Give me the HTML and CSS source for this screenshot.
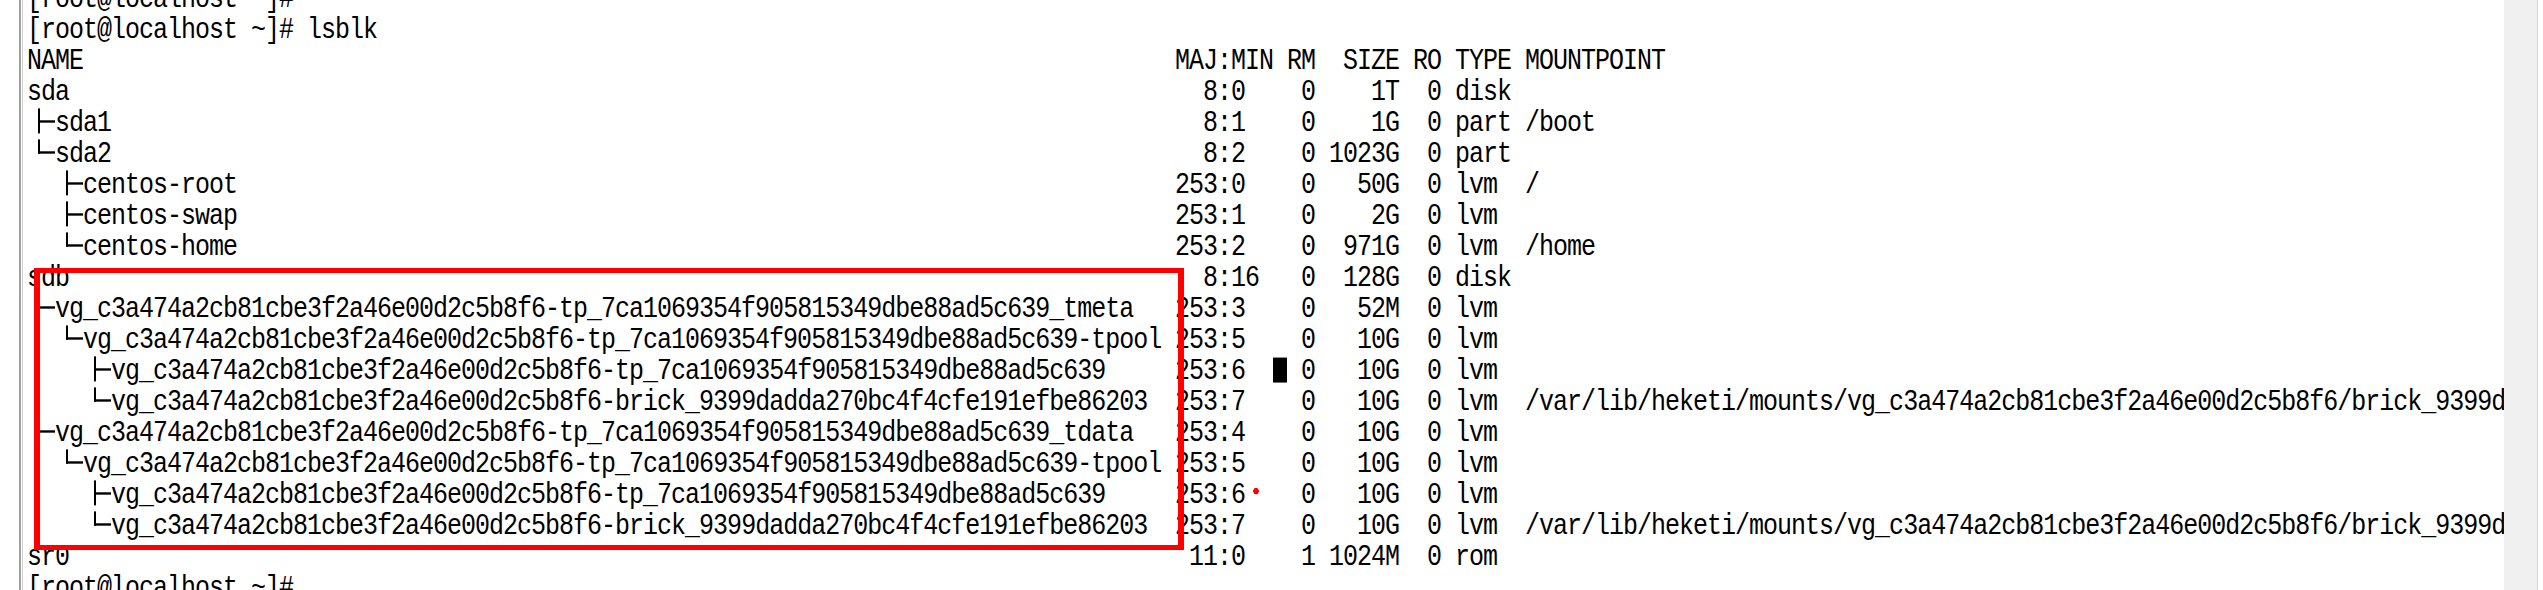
FILE: index.html
```html
<!DOCTYPE html>
<html lang="en">
<head>
  <meta charset="UTF-8" />
  <title>lsblk</title>
  <link rel="stylesheet" href="styles.css">
</head>
<body>
  <div class="window">
    <div class="gutter"></div>
    <div class="screen">
      <div class="lines">
        <div class="row"><span class="nm">[root@localhost ~]#</span></div>
        <div class="row"><span class="nm">[root@localhost ~]# lsblk</span></div>
        <div class="row"><span class="nm">NAME</span><span class="rest">MAJ:MIN RM  SIZE RO TYPE MOUNTPOINT</span></div>
        <div class="row"><span class="nm">sda</span><span class="rest">  8:0    0    1T  0 disk</span></div>
        <div class="row"><span class="nm"><span class="tee"></span>sda1</span><span class="rest">  8:1    0    1G  0 part /boot</span></div>
        <div class="row"><span class="nm"><span class="end"></span>sda2</span><span class="rest">  8:2    0 1023G  0 part</span></div>
        <div class="row"><span class="nm">  <span class="tee"></span>centos-root</span><span class="rest">253:0    0   50G  0 lvm  /</span></div>
        <div class="row"><span class="nm">  <span class="tee"></span>centos-swap</span><span class="rest">253:1    0    2G  0 lvm</span></div>
        <div class="row"><span class="nm">  <span class="end"></span>centos-home</span><span class="rest">253:2    0  971G  0 lvm  /home</span></div>
        <div class="row"><span class="nm">sdb</span><span class="rest">  8:16   0  128G  0 disk</span></div>
        <div class="row"><span class="nm"><span class="tee"></span>vg_c3a474a2cb81cbe3f2a46e00d2c5b8f6-tp_7ca1069354f905815349dbe88ad5c639_tmeta</span><span class="rest">253:3    0   52M  0 lvm</span></div>
        <div class="row"><span class="nm"><span class="bar"></span><span class="end"></span>vg_c3a474a2cb81cbe3f2a46e00d2c5b8f6-tp_7ca1069354f905815349dbe88ad5c639-tpool</span><span class="rest">253:5    0   10G  0 lvm</span></div>
        <div class="row"><span class="nm"><span class="bar"></span>  <span class="tee"></span>vg_c3a474a2cb81cbe3f2a46e00d2c5b8f6-tp_7ca1069354f905815349dbe88ad5c639</span><span class="rest">253:6  <span class="cursor"></span> 0   10G  0 lvm</span></div>
        <div class="row"><span class="nm"><span class="bar"></span>  <span class="end"></span>vg_c3a474a2cb81cbe3f2a46e00d2c5b8f6-brick_9399dadda270bc4f4cfe191efbe86203</span><span class="rest">253:7    0   10G  0 lvm  /var/lib/heketi/mounts/vg_c3a474a2cb81cbe3f2a46e00d2c5b8f6/brick_9399d</span></div>
        <div class="row"><span class="nm"><span class="end"></span>vg_c3a474a2cb81cbe3f2a46e00d2c5b8f6-tp_7ca1069354f905815349dbe88ad5c639_tdata</span><span class="rest">253:4    0   10G  0 lvm</span></div>
        <div class="row"><span class="nm">  <span class="end"></span>vg_c3a474a2cb81cbe3f2a46e00d2c5b8f6-tp_7ca1069354f905815349dbe88ad5c639-tpool</span><span class="rest">253:5    0   10G  0 lvm</span></div>
        <div class="row"><span class="nm">    <span class="tee"></span>vg_c3a474a2cb81cbe3f2a46e00d2c5b8f6-tp_7ca1069354f905815349dbe88ad5c639</span><span class="rest">253:6<span class="dot"></span>   0   10G  0 lvm</span></div>
        <div class="row"><span class="nm">    <span class="end"></span>vg_c3a474a2cb81cbe3f2a46e00d2c5b8f6-brick_9399dadda270bc4f4cfe191efbe86203</span><span class="rest">253:7    0   10G  0 lvm  /var/lib/heketi/mounts/vg_c3a474a2cb81cbe3f2a46e00d2c5b8f6/brick_9399d</span></div>
        <div class="row"><span class="nm">sr0</span><span class="rest"> 11:0    1 1024M  0 rom</span></div>
        <div class="row"><span class="nm">[root@localhost ~]#</span></div>
      </div>
      <div class="mark"></div>
    </div>
    <div class="scroll"></div>
  </div>
</body>
</html>
```

FILE: styles.css
```css
body {
  margin: 0;
  background: #fff;
  overflow: hidden;
}
.window {
  display: flex;
  height: 590px;
}
.gutter {
  flex: none;
  width: 19px;
}
.screen {
  position: relative;
  flex: none;
  width: 2485px;
  box-sizing: border-box;
  border-left: 2px solid #a0a0a0;
  box-shadow: inset 1px 0 0 #fff, inset 2px 0 0 #cfcfcf;
  padding-left: 6px;
  overflow: hidden;
  font-family: "Liberation Mono", monospace;
  font-size: 25px;
  letter-spacing: -1px;
  color: #000;
}
.lines {
  margin-top: -17px;
}
.row {
  display: grid;
  grid-template-columns: 1148px max-content;
  height: 31px;
  line-height: 35px;
  transform: scaleY(1.19);
  transform-origin: 0 24px;
}
.nm, .rest {
  white-space: pre;
}
.tee, .end, .bar {
  display: inline-block;
  width: 28px;
  height: 31px;
  vertical-align: top;
  background-repeat: no-repeat;
  background-image: linear-gradient(#000, #000), linear-gradient(#000, #000);
}
.tee {
  background-size: 2px 21px, 15px 2px;
  background-position: 11px 5px, 13px 15px;
}
.end {
  background-size: 2px 12px, 17px 2px;
  background-position: 11px 5px, 11px 15px;
}
.bar {
  background-image: linear-gradient(#000, #000);
  background-size: 2px 31px;
  background-position: 11px 0;
}
.cursor {
  display: inline-block;
  width: 14px;
  height: 21px;
  background: #000;
  vertical-align: -3px;
}
.dot {
  display: inline-block;
  width: 14px;
  height: 10px;
  vertical-align: 5px;
  background: radial-gradient(circle at 11px 5px, #f00 2.5px, transparent 3px);
}
.mark {
  position: absolute;
  left: 13px;
  top: 268px;
  width: 1150px;
  height: 282px;
  box-sizing: border-box;
  border: 5px solid #f00;
  border-left-width: 6px;
  border-right-width: 6px;
}
.scroll {
  flex: none;
  width: 33px;
  background: #f0f0f0;
  border-right: 1px solid #d4d4d4;
}
```
